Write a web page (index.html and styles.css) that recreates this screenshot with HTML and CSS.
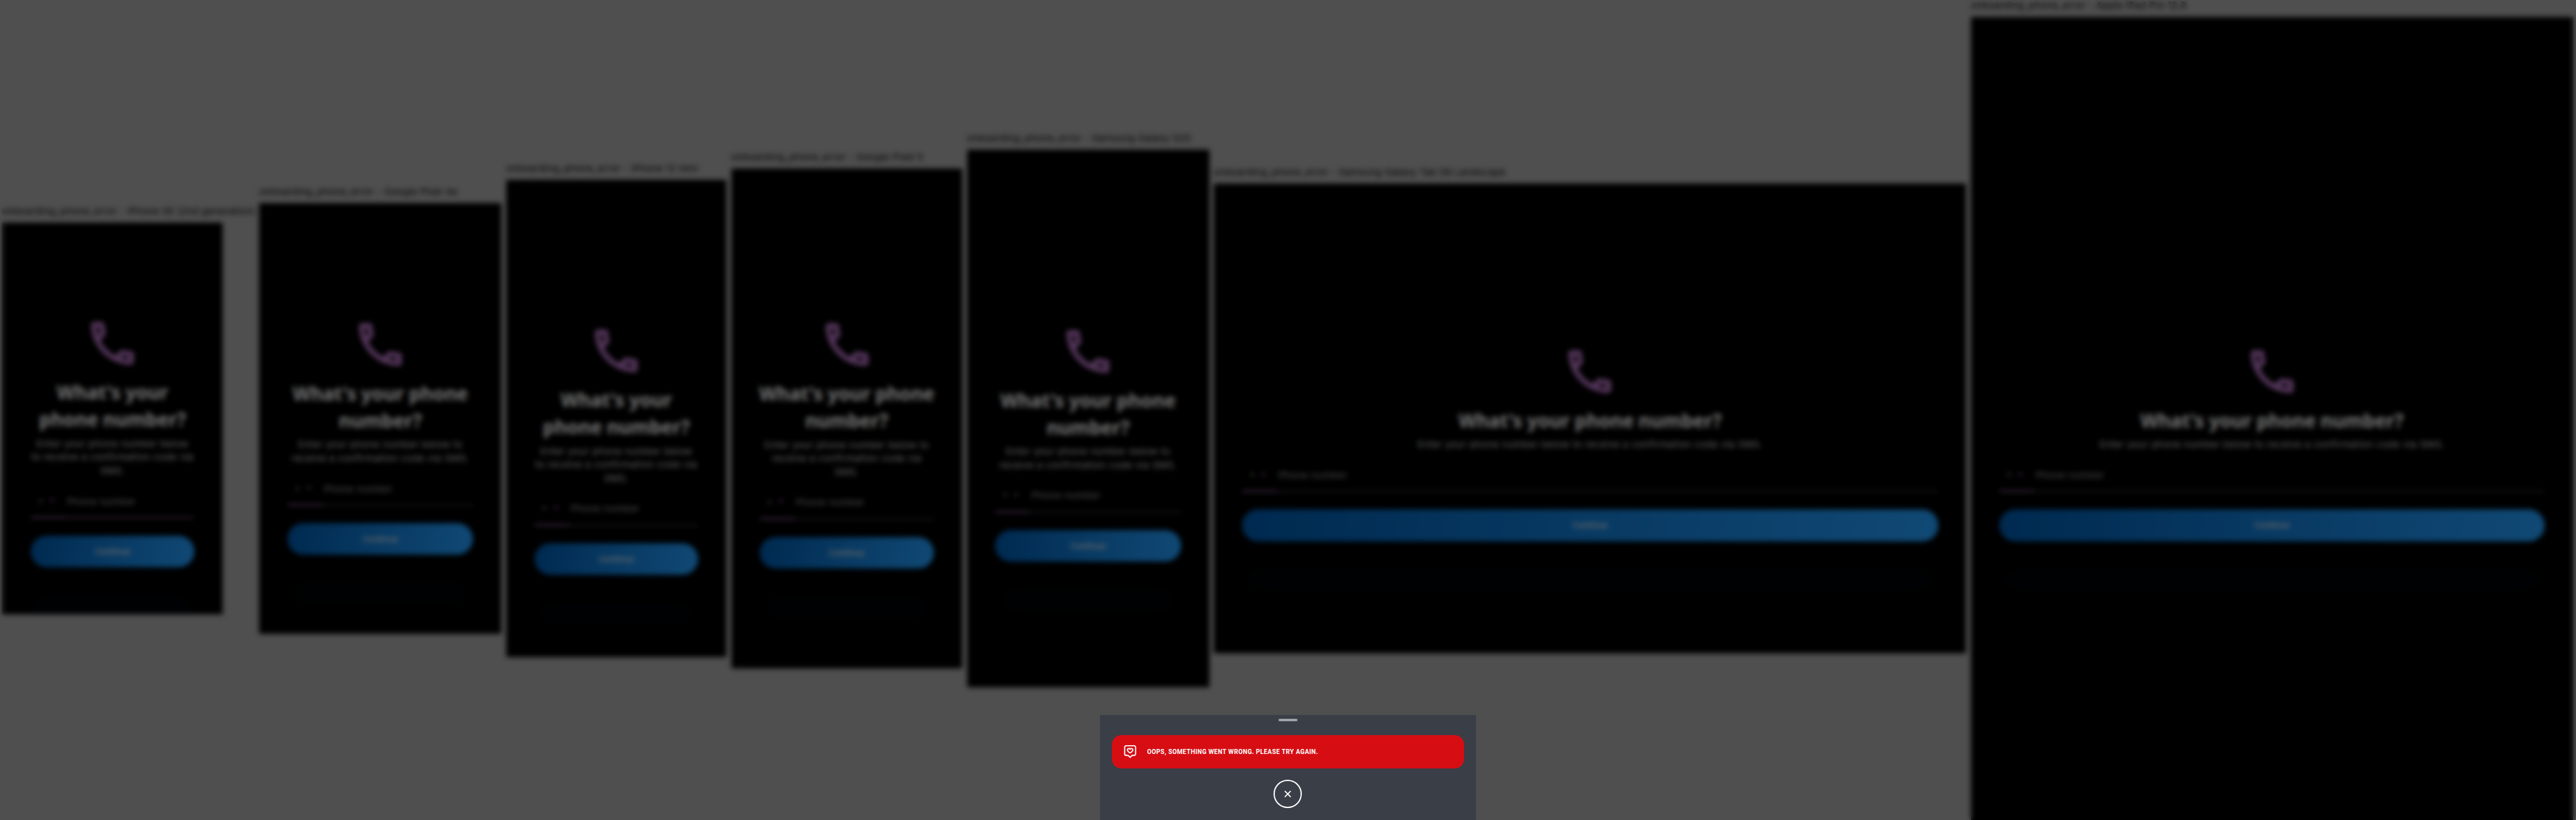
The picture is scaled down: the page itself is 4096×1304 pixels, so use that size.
FILE: index.html
```
<!DOCTYPE html>
<html lang="en">
<head>
<meta charset="utf-8">
<title>Onboarding phone error</title>
<link rel="stylesheet" href="styles.css">
</head>
<body>
<main class="stage">
  <div class="scenarios" id="scenarios"></div>
  <div class="barrier"></div>
  <section class="sheet">
    <div class="handle"></div>
    <div class="alert">
      <svg class="alert-icon" viewBox="0 0 24 24" fill="none" stroke="#fff" stroke-width="2" stroke-linejoin="round">
        <path d="M5 2h13.500a2.500 2.500 0 0 1 2.500 2.500v11.500a2.500 2.500 0 0 1-2.500 2.500h-3.300L11.750 21.800 8.300 18.500H5a2.500 2.500 0 0 1-2.500-2.500V4.500A2.500 2.500 0 0 1 5 2z"/>
        <path d="M11.750 14.200C9 12.500 7.100 11 7.100 9C7.100 6.500 10.300 5.900 11.750 8C13.200 5.900 16.400 6.500 16.400 9C16.400 11 14.500 12.500 11.750 14.200z"/>
      </svg>
      <span class="alert-text">OOPS, SOMETHING WENT WRONG. PLEASE TRY AGAIN.</span>
    </div>
    <button class="close" aria-label="Close">
      <svg viewBox="0 0 12 12" width="12" height="12" stroke="#fff" stroke-width="1.900" stroke-linecap="round"><path d="M1.500 1.500l9 9M10.500 1.500l-9 9"/></svg>
    </button>
  </section>
</main>
<script src="app.js"></script>
</body>
</html>
```
FILE: styles.css
```
html {
  background: #4f4f4f;
}
body {
  width: 4096px;
  height: 1304px;
  margin: 0;
  overflow: hidden;
  font-family: Inter, "Liberation Sans", sans-serif;
}
.stage {
  zoom: 0.9347;
  position: relative;
  width: 4382px;
  height: 1395px;
  overflow: hidden;
  background: #acacac;
}
.scenarios {
  display: flex;
  align-items: center;
  height: 1395px;
}
.scenario {
  flex: none;
  padding: 0 4px;
}
.scenario-first {
  width: 429px;
}
.label {
  height: 29px;
  box-sizing: border-box;
  font-size: 16px;
  line-height: 20px;
  letter-spacing: 0.42px;
  white-space: nowrap;
  color: #000;
}
.device {
  box-sizing: border-box;
  padding: 0 48px;
  overflow: hidden;
  background: #000;
}
.content {
  display: flex;
  flex-direction: column;
  align-items: center;
  text-align: center;
}
.phone-icon {
  display: block;
  width: 96px;
  height: 96px;
  fill: #c67ed5;
}
.title {
  margin: 12px -4px 0;
  font-family: "Noto Sans", sans-serif;
  font-weight: 700;
  font-size: 32px;
  line-height: 46px;
  letter-spacing: -0.1px;
  color: #fff;
}
.subtitle {
  margin: 8px -2px 0;
  font-size: 16px;
  line-height: 23px;
  letter-spacing: 0.58px;
  color: #d8d8d8;
}
.scenario:nth-child(4) .subtitle {
  margin-inline: 0;
}
.field {
  display: flex;
  align-self: stretch;
  height: 57px;
  margin-top: 11px;
  font-size: 16px;
  line-height: 59px;
  letter-spacing: 0.58px;
  text-align: left;
  color: #a4a4a4;
}
.prefix {
  display: flex;
  gap: 9px;
  align-items: center;
  width: 60px;
  padding-left: 12px;
  box-sizing: border-box;
  border-bottom: 2.2px solid #c67ed5;
}
.arrow {
  border: 5px solid transparent;
  border-top-color: #c67ed5;
  border-bottom: 0;
}
.number {
  flex: 1;
  padding-left: 2px;
  border-bottom: 1.1px solid #888;
}
.field-error .number {
  border-bottom: 2.2px solid #8d5c7e;
}
.continue {
  align-self: stretch;
  height: 54px;
  margin-top: 30px;
  border-radius: 27px;
  background: linear-gradient(100deg, #005bae, #24a0ff);
  box-shadow: 0 92px 24px rgba(0, 110, 160, 0.035);
  font-size: 14px;
  font-weight: 500;
  line-height: 55px;
  color: #e4e4e4;
}
.barrier {
  position: absolute;
  inset: 0;
  background: rgba(0, 0, 0, 0.54);
  backdrop-filter: blur(4.7px);
}
.sheet {
  position: absolute;
  left: 1871px;
  bottom: 0;
  display: flex;
  flex-direction: column;
  align-items: center;
  width: 640px;
  height: 179px;
  background: #3a3e47;
}
.handle {
  width: 32px;
  height: 4px;
  margin-top: 7px;
  border-radius: 2px;
  background: #9da3a6;
}
.alert {
  display: flex;
  align-items: center;
  gap: 16px;
  width: 600px;
  height: 56px;
  margin-top: 24px;
  padding-left: 20px;
  box-sizing: border-box;
  border-radius: 16px;
  background: #d60e14;
}
.alert-icon {
  width: 24px;
  height: 24px;
}
.alert-text {
  font-family: Roboto, sans-serif;
  font-size: 12px;
  font-weight: 700;
  letter-spacing: 0.5px;
  transform: scaleX(0.887);
  transform-origin: left center;
  color: #fff;
}
.close {
  display: flex;
  align-items: center;
  justify-content: center;
  width: 48px;
  height: 48px;
  margin-top: 20px;
  padding: 0;
  box-sizing: border-box;
  border: 2.2px solid #fff;
  border-radius: 50%;
  background: none;
}
```
FILE: app.js
```
const devices = [
  { name: "iPhone SE (2nd generation)", w: 375, h: 667, top: 158, error: true },
  { name: "Google Pixel 4a", w: 412, h: 732, top: 192 },
  { name: "iPhone 12 mini", w: 375, h: 812, top: 243 },
  { name: "Google Pixel 5", w: 393, h: 851, top: 252 },
  { name: "Samsung Galaxy S20", w: 412, h: 915, top: 295 },
  { name: "Samsung Galaxy Tab S8 Landscape", w: 1280, h: 800, top: 272 },
  { name: "Apple iPad Pro 12.9", w: 1024, h: 1366, top: 555 },
];

document.getElementById("scenarios").innerHTML = devices.map((d, i) => `
  <article class="scenario${i === 0 ? " scenario-first" : ""}">
    <div class="label">onboarding_phone_error - ${d.name}</div>
    <div class="device" style="width:${d.w}px;height:${d.h}px;padding-top:${d.top}px">
      <div class="content">
        <svg class="phone-icon" viewBox="0 0 24 24"><path d="M6.540 5c.060.890.210 1.760.450 2.590l-1.200 1.200c-.410-1.200-.670-2.470-.760-3.790h1.510m9.860 12.020c.850.240 1.720.390 2.600.450v1.490c-1.320-.090-2.590-.350-3.800-.750l1.200-1.190M7.500 3H4c-.550 0-1 .450-1 1 0 9.390 7.610 17 17 17 .550 0 1-.450 1-1v-3.490c0-.550-.450-1-1-1-1.240 0-2.450-.200-3.570-.570-.100-.040-.210-.050-.310-.050-.260 0-.510.100-.710.290l-2.200 2.200c-2.830-1.450-5.150-3.760-6.590-6.590l2.200-2.200c.280-.280.360-.670.250-1.020C8.700 6.450 8.500 5.250 8.500 4c0-.550-.450-1-1-1z"/></svg>
        <h1 class="title">What's your phone number?</h1>
        <p class="subtitle">Enter your phone number below to${d.w < 380 ? "&nbsp;" : " "}receive a confirmation code via SMS.</p>
        <div class="field${d.error ? " field-error" : ""}">
          <div class="prefix"><span>+</span><i class="arrow"></i></div>
          <div class="number">Phone number</div>
        </div>
        <div class="continue">Continue</div>
      </div>
    </div>
  </article>`).join("");
```
